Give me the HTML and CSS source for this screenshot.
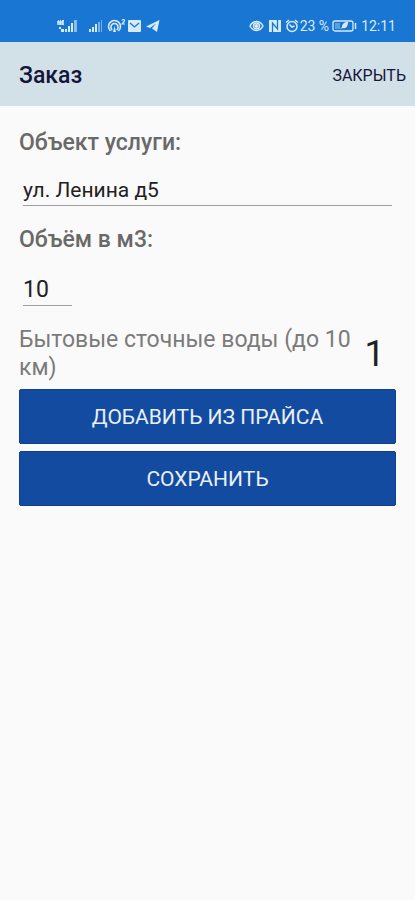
FILE: index.html
```html
<!DOCTYPE html>
<html lang="ru">
<head>
<meta charset="utf-8">
<meta name="viewport" content="width=device-width, initial-scale=1">
<title>Заказ</title>
<link rel="stylesheet" href="styles.css">
</head>
<body>
<div class="status">
  <div class="status-group">
    <svg class="icon" width="22" height="16" viewBox="0 0 22 16" fill="currentColor" aria-hidden="true"><path d="M1 3h7v4H1z" opacity=".75"/><path d="M2 2h1v2h1V2h1v5H4V5H2zM6 2h2v1H7v3h1v1H6zM3 9h2v2H3zM5 11h3v3H5zM9 11h2v3H9zM12 8h2v6h-2zM15 5h2v9h-2z"/><path d="M18 2h3v12h-3z" opacity=".6"/></svg>
    <svg class="icon icon-signal" width="15" height="16" viewBox="0 0 15 16" fill="currentColor" aria-hidden="true"><path d="M1 11h2v3H1zM4 9h2v5H4zM7 6h2v8H7z"/><path d="M10 4h2v10h-2zM13 2h1v12h-1z" opacity=".5"/></svg>
    <svg class="icon icon-hotspot" width="20" height="16" viewBox="0 0 20 16" fill="none" stroke="currentColor" stroke-width="1.600" aria-hidden="true"><path d="M3.500 13A6 6 0 1 1 11.500 13M5.300 12A3.600 3.600 0 1 1 9.700 12"/><path d="M7.500 8L6 14h3z" fill="currentColor" stroke="none"/><path d="M15 2.500c.5-1.500 3-1.200 2.500.5L15 6h3" stroke-width="1.200"/></svg>
    <svg class="icon" width="15" height="16" viewBox="0 0 15 16" aria-hidden="true"><rect x="1" y="2" width="13" height="12" rx="1" fill="currentColor"/><path d="M3 5l4.500 4L12 5" fill="none" stroke="#1976d2" stroke-width="1.300"/></svg>
    <svg class="icon icon-plane" width="14" height="16" viewBox="0 0 14 16" fill="currentColor" aria-hidden="true"><path d="M13.500 2L0 8.500l4 1.500 6-4.500-4 5 5 3.500z"/></svg>
  </div>
  <div class="status-group">
    <svg class="icon" width="15" height="16" viewBox="0 0 15 16" fill="none" stroke="currentColor" stroke-width="1.500" aria-hidden="true"><path d="M1 8c3-6 10-6 13 0-3 6-10 6-13 0z"/><circle cx="7.500" cy="8" r="3"/><circle cx="7.500" cy="8" r="1.200" fill="currentColor"/></svg>
    <svg class="icon icon-nfc" width="14" height="16" viewBox="0 0 14 16" aria-hidden="true"><path d="M1 2h12v12H1z" fill="currentColor"/><path d="M4.500 14V5L9.500 11V2" fill="none" stroke="#1976d2" stroke-width="1.300"/></svg>
    <svg class="icon icon-alarm" width="14" height="16" viewBox="0 0 14 16" fill="none" stroke="currentColor" stroke-width="1.500" aria-hidden="true"><circle cx="7" cy="8.500" r="5"/><path d="M1 4.500L4 2M13 4.500L10 2M4.500 6.500L7 9l2.500-1"/></svg>
    <span>23 %</span>
    <svg class="icon icon-battery" width="25" height="16" viewBox="0 0 25 16" aria-hidden="true"><rect x="1" y="3" width="20" height="10" rx="2" fill="none" stroke="currentColor" stroke-width="1.300"/><path d="M3 5h5v6H3z" fill="currentColor" opacity=".35"/><path d="M16 4c-4 0-6 2-6 5l-2 2 3-1c3 1 5-2 5-6z" fill="currentColor"/><path d="M23.500 5v6" stroke="currentColor" stroke-width="1.500"/></svg>
    <time>12:11</time>
  </div>
</div>
<header class="bar">
  <h1>Заказ</h1>
  <button class="close" type="button">ЗАКРЫТЬ</button>
</header>
<main>
  <form class="form">
    <label for="object">Объект услуги:</label>
    <input id="object" class="object" type="text" value="ул. Ленина д5">
    <label for="volume">Объём в м3:</label>
    <input id="volume" class="volume" type="text" inputmode="numeric" value="10">
    <div class="item">
      <p>Бытовые сточные воды (до 10 км)</p>
      <span class="count">1</span>
    </div>
    <div class="actions">
      <button type="button">ДОБАВИТЬ ИЗ ПРАЙСА</button>
      <button type="submit">СОХРАНИТЬ</button>
    </div>
  </form>
</main>
</body>
</html>
```
FILE: styles.css
```css
* { box-sizing: border-box; }
body {
  margin: 0;
  background: #fafafa;
  font-family: Roboto, "Noto Sans", sans-serif;
  color: #212121;
}
button, input { font: inherit; }
.status {
  display: flex;
  justify-content: space-between;
  height: 42px;
  padding: 10px 19px 0 56px;
  background: #1976d2;
  color: #d5ebf8;
  font-size: 14px;
  line-height: 32px;
}
.status-group { display: flex; align-items: center; }
.icon { flex: none; }
.icon-signal { margin-left: 10px; }
.icon-hotspot { margin-left: 4px; }
.icon-plane { margin-left: 4px; }
.icon-nfc { margin-left: 4px; }
.icon-alarm { margin: 0 1px 0 3px; }
.icon-battery { margin: 0 4px 0 3px; }
.bar {
  display: flex;
  align-items: center;
  justify-content: space-between;
  height: 64px;
  padding: 4px 9px 0 19px;
  background: #d2e0e7;
  color: #15163b;
}
.bar h1 { margin: 0; font-size: 23px; font-weight: 500; line-height: 32px; }
.close {
  padding: 0;
  border: 0;
  background: none;
  color: inherit;
  font-size: 16px;
  line-height: 32px;
}
.form { padding: 21px 19px; }
.form label {
  display: block;
  color: #696969;
  font-size: 23px;
  font-weight: 500;
  line-height: 32px;
}
.form input {
  display: block;
  height: 32px;
  margin-left: 4px;
  padding: 0;
  border: 0;
  border-bottom: 1px solid #a0a0a0;
  border-radius: 0;
  background: none;
  color: #212121;
  outline: 0;
}
.form .object { width: calc(100% - 8px); margin-top: 15px; margin-bottom: 18px; font-size: 21px; }
.form .volume { width: 49px; margin-top: 18px; margin-bottom: 20px; font-size: 23px; }
.item {
  display: flex;
  align-items: center;
  justify-content: space-between;
  color: #7b7b7b;
  font-size: 23px;
  line-height: 28px;
}
.item p { flex: 1; margin: 0; }
.count { width: 43px; text-align: center; color: #212121; font-size: 36px; }
.actions { display: grid; gap: 7px; margin-top: 7px; }
.actions button {
  height: 55px;
  padding: 0;
  border: 1px solid #103f93;
  border-radius: 2px;
  background: #134ba0;
  color: #e9f0fa;
  font-size: 21px;
}
```
